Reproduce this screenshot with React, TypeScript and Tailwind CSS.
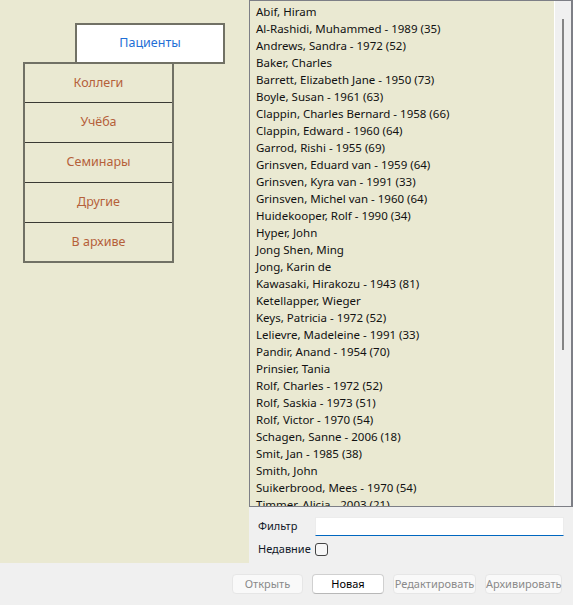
import React from "react";

const patients = [
  "Abif, Hiram",
  "Al-Rashidi, Muhammed - 1989 (35)",
  "Andrews, Sandra - 1972 (52)",
  "Baker, Charles",
  "Barrett, Elizabeth Jane - 1950 (73)",
  "Boyle, Susan - 1961 (63)",
  "Clappin, Charles Bernard - 1958 (66)",
  "Clappin, Edward - 1960 (64)",
  "Garrod, Rishi - 1955 (69)",
  "Grinsven, Eduard van - 1959 (64)",
  "Grinsven, Kyra van - 1991 (33)",
  "Grinsven, Michel van - 1960 (64)",
  "Huidekooper, Rolf - 1990 (34)",
  "Hyper, John",
  "Jong Shen, Ming",
  "Jong, Karin de",
  "Kawasaki, Hirakozu - 1943 (81)",
  "Ketellapper, Wieger",
  "Keys, Patricia - 1972 (52)",
  "Lelievre, Madeleine - 1991 (33)",
  "Pandir, Anand - 1954 (70)",
  "Prinsier, Tania",
  "Rolf, Charles - 1972 (52)",
  "Rolf, Saskia - 1973 (51)",
  "Rolf, Victor - 1970 (54)",
  "Schagen, Sanne - 2006 (18)",
  "Smit, Jan - 1985 (38)",
  "Smith, John",
  "Suikerbrood, Mees - 1970 (54)",
  "Timmer, Alicia - 2003 (21)",
];

// row heights include the 1px divider on top
const tabs = [
  { label: "Коллеги", h: "h-[38px]" },
  { label: "Учёба", h: "h-[40px]" },
  { label: "Семинары", h: "h-[40px]" },
  { label: "Другие", h: "h-[40px]" },
  { label: "В архиве", h: "h-[39px]" },
];

function ActionButton({ label, enabled }: { label: string; enabled?: boolean }) {
  return (
    <button
      type="button"
      disabled={!enabled}
      className={
        enabled
          ? "h-[20px] rounded-[4px] border border-[#d0d0d0] border-b-[#b8b8b8] bg-white text-[11px] text-black whitespace-nowrap"
          : "h-[20px] rounded-[4px] border border-[#e6e6e6] bg-[#f9f9f9] text-[11px] text-[#8a8a8a] whitespace-nowrap"
      }
    >
      {label}
    </button>
  );
}

export default function App() {
  return (
    <div
      className="w-[573px] h-[605px] bg-[#f0f0f0] flex flex-col overflow-hidden"
      style={{ fontFamily: '"Noto Sans", "Open Sans", sans-serif' }}
    >
      <div className="flex h-[563px]">
        {/* Category tabs */}
        <div className="w-[249px] shrink-0 bg-[#eae9d2] pt-[23px]">
          <div className="ml-[75px] w-[150px] h-[41px] border-2 border-[#717165] bg-white flex items-center justify-center text-[12.5px] text-[#1f6fd6]">
            Пациенты
          </div>
          <div className="ml-[23px] -mt-[2px] w-[151px] border-2 border-[#717165] flex flex-col">
            {tabs.map((t, i) => (
              <div
                key={t.label}
                className={`${t.h} flex items-center justify-center text-[12.5px] text-[#b5603a] ${
                  i > 0 ? "border-t border-[#3a3a34]" : ""
                }`}
              >
                {t.label}
              </div>
            ))}
          </div>
        </div>

        {/* Patient list + filter */}
        <div className="flex-1 flex flex-col">
          <div className="h-[507px] border border-[#7d7f86] border-r-2 flex">
            <div className="flex-1 bg-[#eae9d2] border-r border-white overflow-hidden pl-[6px] pt-[2px]">
              {patients.map((p) => (
                <div
                  key={p}
                  className="h-[17px] leading-[17px] text-[11.5px] text-[#111] whitespace-nowrap"
                >
                  {p}
                </div>
              ))}
            </div>
            <div className="w-[16px] bg-[#f0f0f0] pt-[18px]">
              <div className="ml-[7px] w-[2px] h-[331px] bg-[#858585]" />
            </div>
          </div>

          <div className="pl-[9px] pr-[9px] pt-[10px] flex flex-col gap-[6px] text-[11px] text-[#101828]">
            <div className="flex items-center h-[19px]">
              <span className="w-[57px] shrink-0 whitespace-nowrap">Фильтр</span>
              <div className="flex-1 h-[19px] bg-white border border-[#ececec] border-b-[#0067c0]" />
            </div>
            <div className="flex items-center h-[14px]">
              <span className="w-[57px] shrink-0 whitespace-nowrap">Недавние</span>
              <div className="w-[13px] h-[13px] shrink-0 rounded-[3px] border border-[#444] bg-[#f7f7f7]" />
            </div>
          </div>
        </div>
      </div>

      {/* Actions */}
      <div className="flex justify-end gap-[9px] pr-[11px] pt-[11px]">
        <div className="w-[71px] flex flex-col"><ActionButton label="Открыть" /></div>
        <div className="w-[72px] flex flex-col"><ActionButton label="Новая" enabled /></div>
        <div className="w-[83px] flex flex-col"><ActionButton label="Редактировать" /></div>
        <div className="w-[77px] flex flex-col"><ActionButton label="Архивировать" /></div>
      </div>
    </div>
  );
}
